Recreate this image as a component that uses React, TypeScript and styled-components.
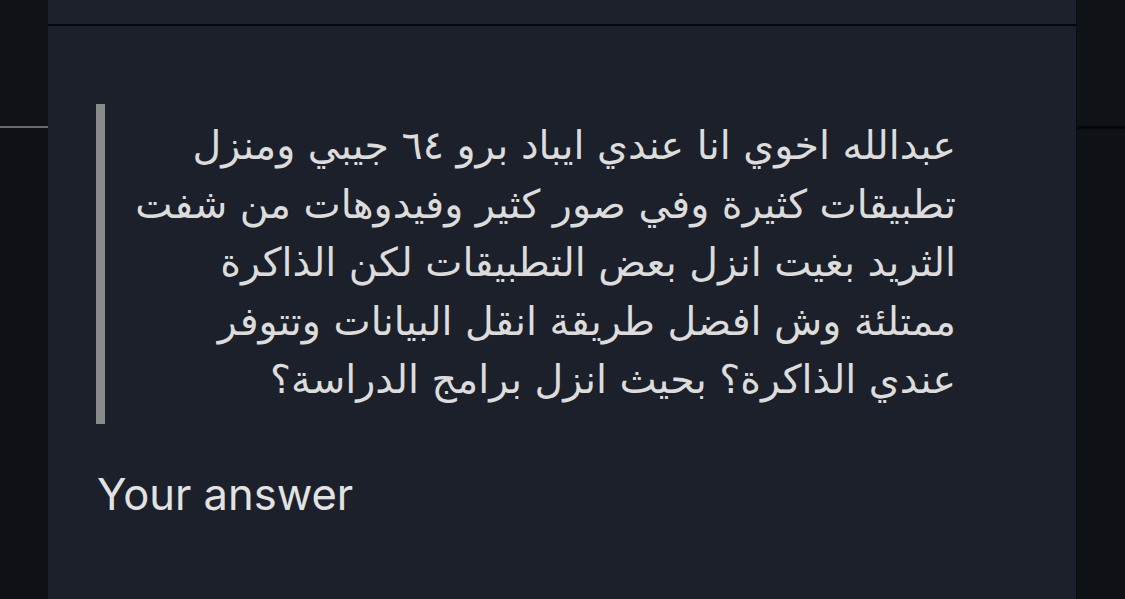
import React from 'react';
import styled, { createGlobalStyle } from 'styled-components';

const GlobalStyle = createGlobalStyle`
  html, body {
    margin: 0;
    padding: 0;
    background: #0e1116;
    overflow: hidden;
  }
`;

const lines = [
  'عبدالله اخوي انا عندي ايباد برو ٦٤ جيبي ومنزل',
  'تطبيقات كثيرة وفي صور كثير وفيدوهات من شفت',
  'الثريد بغيت انزل بعض التطبيقات لكن الذاكرة',
  'ممتلئة وش افضل طريقة انقل البيانات وتتوفر',
  'عندي الذاكرة؟ بحيث انزل برامج الدراسة؟',
];

const App = () => {
  return (
    <>
      <GlobalStyle />
      <Page>
        <Gutter $lineColor="#6b6b6b" $lineHeight={2}>
          <div className="top" />
        </Gutter>
        <Panel>
          <PanelHeader />
          <PanelBody>
            <Quote>
              <QuoteText dir="rtl" lang="ar">
                {lines.map((l) => (
                  <Line key={l}>{l}</Line>
                ))}
              </QuoteText>
            </Quote>
            <AnswerLabel>Your answer</AnswerLabel>
          </PanelBody>
        </Panel>
        <Gutter $lineColor="#05070a" $lineHeight={3} $edge>
          <div className="top" />
        </Gutter>
      </Page>
    </>
  );
};

const Page = styled.div`
  display: flex;
  width: 1125px;
  height: 599px;
  background: #0e1116;
`;

const Gutter = styled.div<{ $lineColor: string; $lineHeight: number; $edge?: boolean }>`
  width: 48px;
  flex-shrink: 0;
  background: #0e1116;
  border-left: ${(p) => (p.$edge ? '1px solid #0a0c10' : 'none')};

  .top {
    height: 126px;
    border-bottom: ${(p) => `${p.$lineHeight}px solid ${p.$lineColor}`};
    background: #0f1217;
  }
`;

const Panel = styled.div`
  flex: 1;
  display: flex;
  flex-direction: column;
  background: #1c202a;
`;

const PanelHeader = styled.div`
  height: 24px;
  background: #1c212b;
  border-bottom: 2px solid #05070a;
`;

const PanelBody = styled.div`
  display: flex;
  flex-direction: column;
  padding: 78px 120px 0 48px;
`;

const Quote = styled.blockquote`
  margin: 0;
  display: flex;
  border-left: 9px solid #8a8a8a;
  padding: 12px 0 15px 30px;
`;

const QuoteText = styled.div`
  flex: 1;
  display: flex;
  flex-direction: column;
  align-items: flex-start;
  font-family: 'DejaVu Sans', 'Noto Sans', sans-serif;
  font-size: 39.5px;
  line-height: 58.5px;
  color: #dcdcdc;
`;

const Line = styled.span`
  white-space: nowrap;
`;

const AnswerLabel = styled.div`
  margin-top: 45px;
  margin-left: 1px;
  font-family: Inter, 'Liberation Sans', sans-serif;
  font-size: 43.5px;
  line-height: 50px;
  color: #e2e2e2;
`;

export default App;
